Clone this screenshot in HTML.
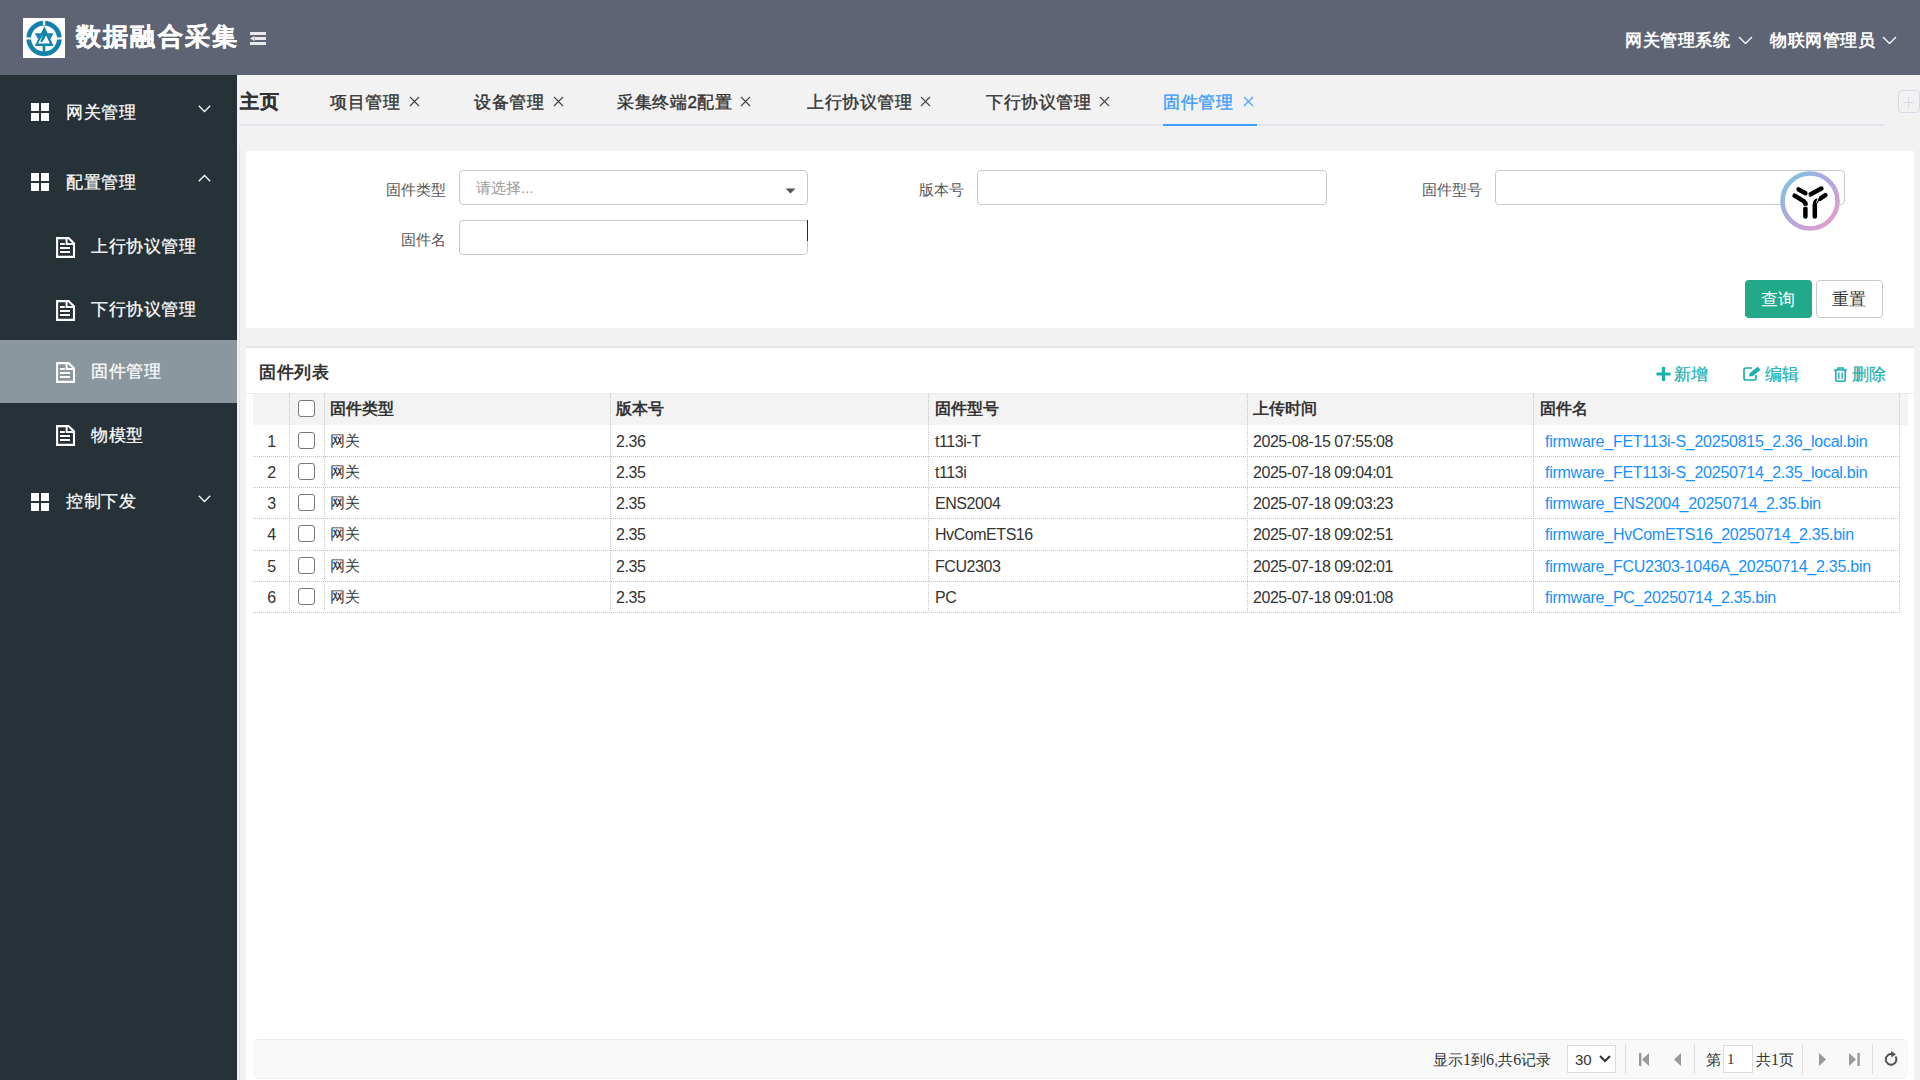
<!DOCTYPE html>
<html><head><meta charset="utf-8">
<style>
*{margin:0;padding:0;box-sizing:border-box}
html,body{width:1920px;height:1080px;overflow:hidden;background:#f2f2f2;font-family:"Liberation Sans",sans-serif;color:#333}
.abs{position:absolute}
.t{position:absolute;white-space:nowrap;line-height:1}
#hdr{position:absolute;left:0;top:0;width:1920px;height:75px;background:#5e6474}
#side{position:absolute;left:0;top:75px;width:237px;height:1005px;background:#263238}
#side .t{font-size:17px;letter-spacing:.6px;color:#fff;-webkit-text-stroke:0.25px #fff}
.tab{position:absolute;top:93.5px;font-size:17px;letter-spacing:.6px;color:#333;font-weight:400;-webkit-text-stroke:0.4px currentColor;white-space:nowrap;line-height:1}
.x{position:absolute;top:96px;width:11px;height:11px}
.lbl{position:absolute;font-size:15px;color:#555;white-space:nowrap;line-height:1}
.inp{position:absolute;height:35px;width:349px;border:1px solid #c9c9c9;border-radius:4px;background:#fff}
.panel{position:absolute;background:#fff}
.vd{position:absolute;top:394px;width:1px;height:218px;background:repeating-linear-gradient(180deg,#c4c4c4 0 1px,transparent 1px 2px)}
.hd{position:absolute;left:253px;width:1647px;height:1px;background:repeating-linear-gradient(90deg,#c4c4c4 0 1px,transparent 1px 2px)}
.th{position:absolute;top:401px;font-size:16px;font-weight:bold;color:#333;white-space:nowrap;line-height:1}
.td{position:absolute;font-size:16px;letter-spacing:-.45px;color:#333;white-space:nowrap;line-height:1}
.sf{font-family:"Liberation Serif",serif;font-size:16px}
.lk{color:#1890ff;letter-spacing:-.26px}
.cb{position:absolute;left:298px;width:17px;height:17px;border:1.5px solid #777;border-radius:3px;background:#fff}
</style></head><body>
<div id="hdr">
  <div class="abs" style="left:23px;top:18px;width:42px;height:40px;background:#fff">
    <svg width="42" height="40" viewBox="0 0 42 40" style="position:absolute;left:0;top:0">
      <circle cx="21.05" cy="20.5" r="15.35" fill="none" stroke="#1282ad" stroke-width="4.7"/>
      <g fill="#fff"><rect x="19.9" y="2" width="2.3" height="5"/><rect x="2" y="19.4" width="6" height="2.1"/><rect x="34" y="19.4" width="6" height="2.1"/></g>
      <g fill="#1282ad">
        <path d="M21.4 8.3 L30.5 28.1 L11.8 28.1 Z M21.4 13.8 L26.9 25.6 L15 25.6 Z" fill-rule="evenodd"/>
        <path d="M11.8 15.3 L18.3 15.3 L15.2 21.2 Z"/>
        <path d="M24.4 15.3 L30.4 15.3 L27.4 21.2 Z"/>
        <path d="M21.4 12.6 L23.6 16.6 L19.6 23.8 L17.2 23.8 Z"/>
        <rect x="19.7" y="27" width="2.6" height="7.5"/>
      </g>
    </svg>
  </div>
  <div class="t" style="left:76px;top:24px;font-size:25px;font-weight:bold;color:#fff;letter-spacing:2.2px;-webkit-text-stroke:0.4px #fff">数据融合采集</div>
  <svg class="abs" style="left:250px;top:32px" width="17" height="14" viewBox="0 0 17 14">
    <g fill="#e8e8ee"><rect x="0" y="0" width="16" height="3"/><rect x="5" y="5" width="11" height="3"/><rect x="0" y="10" width="16" height="3"/><path d="M0 6.5 L4.6 3.9 L4.6 9.1 Z"/></g>
  </svg>
  <div class="t" style="left:1625px;top:32px;font-size:17px;letter-spacing:.6px;font-weight:bold;color:#fff">网关管理系统</div>
  <svg class="abs" style="left:1738px;top:36px" width="15" height="9" viewBox="0 0 15 9"><path d="M1 1 L7.5 7.5 L14 1" fill="none" stroke="#fff" stroke-width="1.25"/></svg>
  <div class="t" style="left:1770px;top:31.5px;font-size:17px;letter-spacing:.6px;font-weight:bold;color:#fff">物联网管理员</div>
  <svg class="abs" style="left:1882px;top:36px" width="15" height="9" viewBox="0 0 15 9"><path d="M1 1 L7.5 7.5 L14 1" fill="none" stroke="#fff" stroke-width="1.25"/></svg>
</div>

<div id="side">
  <div class="abs" style="left:0;top:265px;width:237px;height:63px;background:#8a979e"></div>
  <!-- grid icons -->
  <svg class="abs" style="left:31px;top:27.5px" width="18" height="18"><g fill="#fff"><rect x="0" y="0" width="8" height="8"/><rect x="10" y="0" width="8" height="8"/><rect x="0" y="10" width="8" height="8"/><rect x="10" y="10" width="8" height="8"/></g></svg>
  <div class="t" style="left:66px;top:29px">网关管理</div>
  <svg class="abs" style="left:198px;top:30px" width="13" height="8" viewBox="0 0 13 8"><path d="M0.8 0.8 L6.5 6.5 L12.2 0.8" fill="none" stroke="#fff" stroke-width="1.25"/></svg>

  <svg class="abs" style="left:31px;top:97.5px" width="18" height="18"><g fill="#fff"><rect x="0" y="0" width="8" height="8"/><rect x="10" y="0" width="8" height="8"/><rect x="0" y="10" width="8" height="8"/><rect x="10" y="10" width="8" height="8"/></g></svg>
  <div class="t" style="left:66px;top:99px">配置管理</div>
  <svg class="abs" style="left:198px;top:99px" width="13" height="8" viewBox="0 0 13 8"><path d="M0.8 7.2 L6.5 1.5 L12.2 7.2" fill="none" stroke="#fff" stroke-width="1.25"/></svg>

  <svg class="abs doc" style="left:56px;top:162px" width="20" height="22" viewBox="0 0 20 22"><path d="M1.1 1.1 H12.6 L18 6.5 V19.9 H1.1 Z" fill="none" stroke="#fff" stroke-width="2.1" stroke-linejoin="miter"/><path d="M10.6 1 V7 H18" fill="none" stroke="#fff" stroke-width="1.9"/><rect x="4" y="6" width="4.8" height="2" fill="#fff"/><rect x="4" y="10" width="10" height="2" fill="#fff"/><rect x="4" y="14" width="10" height="2" fill="#fff"/></svg>
  <div class="t" style="left:91px;top:163px">上行协议管理</div>

  <svg class="abs doc" style="left:56px;top:225px" width="20" height="22" viewBox="0 0 20 22"><path d="M1.1 1.1 H12.6 L18 6.5 V19.9 H1.1 Z" fill="none" stroke="#fff" stroke-width="2.1" stroke-linejoin="miter"/><path d="M10.6 1 V7 H18" fill="none" stroke="#fff" stroke-width="1.9"/><rect x="4" y="6" width="4.8" height="2" fill="#fff"/><rect x="4" y="10" width="10" height="2" fill="#fff"/><rect x="4" y="14" width="10" height="2" fill="#fff"/></svg>
  <div class="t" style="left:91px;top:226px">下行协议管理</div>

  <svg class="abs doc" style="left:56px;top:287px" width="20" height="22" viewBox="0 0 20 22"><path d="M1.1 1.1 H12.6 L18 6.5 V19.9 H1.1 Z" fill="none" stroke="#fff" stroke-width="2.1" stroke-linejoin="miter"/><path d="M10.6 1 V7 H18" fill="none" stroke="#fff" stroke-width="1.9"/><rect x="4" y="6" width="4.8" height="2" fill="#fff"/><rect x="4" y="10" width="10" height="2" fill="#fff"/><rect x="4" y="14" width="10" height="2" fill="#fff"/></svg>
  <div class="t" style="left:91px;top:288px">固件管理</div>

  <svg class="abs doc" style="left:56px;top:350px" width="20" height="22" viewBox="0 0 20 22"><path d="M1.1 1.1 H12.6 L18 6.5 V19.9 H1.1 Z" fill="none" stroke="#fff" stroke-width="2.1" stroke-linejoin="miter"/><path d="M10.6 1 V7 H18" fill="none" stroke="#fff" stroke-width="1.9"/><rect x="4" y="6" width="4.8" height="2" fill="#fff"/><rect x="4" y="10" width="10" height="2" fill="#fff"/><rect x="4" y="14" width="10" height="2" fill="#fff"/></svg>
  <div class="t" style="left:91px;top:351.5px">物模型</div>

  <svg class="abs" style="left:31px;top:417.5px" width="18" height="18"><g fill="#fff"><rect x="0" y="0" width="8" height="8"/><rect x="10" y="0" width="8" height="8"/><rect x="0" y="10" width="8" height="8"/><rect x="10" y="10" width="8" height="8"/></g></svg>
  <div class="t" style="left:66px;top:418px">控制下发</div>
  <svg class="abs" style="left:198px;top:420px" width="13" height="8" viewBox="0 0 13 8"><path d="M0.8 0.8 L6.5 6.5 L12.2 0.8" fill="none" stroke="#fff" stroke-width="1.25"/></svg>
</div>

<!-- content edges -->

<div class="abs" style="left:239px;top:145px;width:1px;height:935px;background:#e4e4e4"></div>

<!-- tabs -->
<div class="tab" style="left:240px;top:91.5px;font-size:19px;font-weight:bold;-webkit-text-stroke:0.3px currentColor">主页</div>
<div class="tab" style="left:330px">项目管理</div>
<div class="tab" style="left:474px">设备管理</div>
<div class="tab" style="left:617px">采集终端2配置</div>
<div class="tab" style="left:807px">上行协议管理</div>
<div class="tab" style="left:986px">下行协议管理</div>
<div class="tab" style="left:1163px;color:#409eff">固件管理</div>
<svg class="x" style="left:408.5px" viewBox="0 0 11 11"><path d="M1 1 L10 10 M10 1 L1 10" stroke="#444" stroke-width="1.1"/></svg>
<svg class="x" style="left:552.5px" viewBox="0 0 11 11"><path d="M1 1 L10 10 M10 1 L1 10" stroke="#444" stroke-width="1.1"/></svg>
<svg class="x" style="left:740px" viewBox="0 0 11 11"><path d="M1 1 L10 10 M10 1 L1 10" stroke="#444" stroke-width="1.1"/></svg>
<svg class="x" style="left:919.5px" viewBox="0 0 11 11"><path d="M1 1 L10 10 M10 1 L1 10" stroke="#444" stroke-width="1.1"/></svg>
<svg class="x" style="left:1098.5px" viewBox="0 0 11 11"><path d="M1 1 L10 10 M10 1 L1 10" stroke="#444" stroke-width="1.1"/></svg>
<svg class="x" style="left:1242.5px" viewBox="0 0 11 11"><path d="M1 1 L10 10 M10 1 L1 10" stroke="#409eff" stroke-width="1.1"/></svg>
<div class="abs" style="left:239px;top:124px;width:1646px;height:2px;background:#e2e6ee"></div>
<div class="abs" style="left:1163px;top:124px;width:94px;height:2px;background:#409eff"></div>
<div class="abs" style="left:1898px;top:90px;width:22px;height:23px;border:1px solid #d3dbe6;border-radius:4px"></div>
<svg class="abs" style="left:1903px;top:97px" width="12" height="12"><path d="M5.5 0.5 V10.5 M0.5 5.5 H10.5" stroke="#d3dbe6" stroke-width="1"/></svg>

<!-- search panel -->
<div class="panel" style="left:246px;top:151px;width:1668px;height:177px"></div>
<div class="lbl" style="left:386px;top:182px">固件类型</div>
<div class="inp" style="left:459px;top:170px"></div>
<div class="t" style="left:476px;top:180px;font-size:15px;color:#999">请选择...</div>
<svg class="abs" style="left:785px;top:188px" width="11" height="6"><path d="M0.5 0.5 L10.5 0.5 L5.5 5.5 Z" fill="#555"/></svg>
<div class="lbl" style="left:401px;top:232px">固件名</div>
<div class="inp" style="left:459px;top:220px"></div>
<div class="abs" style="left:806.5px;top:220px;width:1.5px;height:21px;background:#2a2a2a"></div>
<div class="lbl" style="left:919px;top:182px">版本号</div>
<div class="inp" style="left:977px;top:170px;width:350px"></div>
<div class="lbl" style="left:1422px;top:182px">固件型号</div>
<div class="inp" style="left:1495px;top:170px;width:350px"></div>
<div class="abs" style="left:1745px;top:280px;width:67px;height:38px;background:#21a98a;border-radius:4px"></div>
<div class="t" style="left:1761px;top:291px;font-size:17px;color:#fff">查询</div>
<div class="abs" style="left:1816px;top:280px;width:67px;height:38px;background:#fff;border:1px solid #c9c9c9;border-radius:4px"></div>
<div class="t" style="left:1832px;top:291px;font-size:17px;color:#333">重置</div>

<!-- logo bubble -->
<svg class="abs" style="left:1780px;top:171px" width="60" height="60" viewBox="0 0 60 60">
  <defs><linearGradient id="rg" x1="0" y1="0" x2="1" y2="1"><stop offset="0" stop-color="#72c8de"/><stop offset="0.5" stop-color="#b3a6e0"/><stop offset="1" stop-color="#f09ac4"/></linearGradient></defs>
  <circle cx="30" cy="30" r="29" fill="#fff"/>
  <circle cx="30" cy="30" r="27.5" fill="none" stroke="url(#rg)" stroke-width="4.6"/>
  <g stroke="#000" stroke-width="4.5" stroke-linecap="round" fill="none">
    <path d="M18.6 18.4 L25.6 22.2"/>
    <path d="M30.2 23.6 L41.4 17.6"/>
    <path d="M14.6 24.6 L23.6 30.2 Q25.6 31.6 25.6 33.6"/>
    <path d="M25.4 37.4 V45.6"/>
    <path d="M45.4 24.2 L39.8 27.8"/>
    <path d="M34.8 33.2 Q34.8 31.2 36.6 29.8 M34.8 33.2 V45.6"/>
  </g>
  <g stroke="#fff" stroke-width="0.9" fill="none">
    <path d="M27.6 21.4 L29.2 25.8"/>
    <path d="M22.4 35.4 L28.6 35.2"/>
    <path d="M36.4 31.8 L38.8 25.6"/>
  </g>
</svg>

<!-- table panel -->
<div class="panel" style="left:246px;top:346px;width:1668px;height:734px;border-top:2px solid #e3e7ec"></div>
<div class="t" style="left:259px;top:364px;font-size:17px;letter-spacing:.5px;font-weight:bold;color:#333">固件列表</div>
<div class="abs" style="left:246px;top:393px;width:1668px;height:1px;background:#e8ebef"></div>
<svg class="abs" style="left:1656px;top:367px" width="15" height="14"><path d="M7.5 0 V14 M0.5 7 H14.5" stroke="#1aafb0" stroke-width="3.2"/></svg>
<div class="t" style="left:1674px;top:366px;font-size:17px;color:#1aafb0;-webkit-text-stroke:.2px #1aafb0">新增</div>
<svg class="abs" style="left:1743px;top:366px" width="19" height="15" viewBox="0 0 19 15"><path d="M9 2 H3 Q1 2 1 4 V12 Q1 14 3 14 H11 Q13 14 13 12 V9" fill="none" stroke="#1aafb0" stroke-width="1.7"/><path d="M6 10.5 L6.8 7.2 L14.5 0.8 L17.6 3.8 L10 10 Z" fill="#1aafb0"/></svg>
<div class="t" style="left:1765px;top:366px;font-size:17px;color:#1aafb0;-webkit-text-stroke:.2px #1aafb0">编辑</div>
<svg class="abs" style="left:1833px;top:367px" width="15" height="15" viewBox="0 0 15 15"><path d="M1 3 H14 M5 3 V1 H10 V3 M2.8 3 V13.2 Q2.8 14.2 3.8 14.2 H11.2 Q12.2 14.2 12.2 13.2 V3" fill="none" stroke="#1aafb0" stroke-width="1.6"/><path d="M5.8 5.5 V11.8 M9.2 5.5 V11.8" stroke="#1aafb0" stroke-width="1.4"/></svg>
<div class="t" style="left:1852px;top:366px;font-size:17px;color:#1aafb0;-webkit-text-stroke:.2px #1aafb0">删除</div>

<div id="tblwrap">
<div class="abs" style="left:253px;top:394px;width:1655px;height:31px;background:#f3f3f3"></div>
<div class="vd" style="left:289px"></div>
<div class="vd" style="left:324px"></div>
<div class="vd" style="left:610px"></div>
<div class="vd" style="left:928px"></div>
<div class="vd" style="left:1247px"></div>
<div class="vd" style="left:1533px"></div>
<div class="vd" style="left:1899px"></div>
<div class="hd" style="top:456px"></div>
<div class="hd" style="top:487px"></div>
<div class="hd" style="top:518px"></div>
<div class="hd" style="top:550px"></div>
<div class="hd" style="top:581px"></div>
<div class="hd" style="top:612px"></div>
<div class="th" style="left:330px">固件类型</div>
<div class="th" style="left:616px">版本号</div>
<div class="th" style="left:935px">固件型号</div>
<div class="th" style="left:1253px">上传时间</div>
<div class="th" style="left:1540px">固件名</div>
<div class="cb" style="top:400px"></div>
<div class="td" style="left:253px;width:37px;text-align:center;top:433.5px">1</div>
<div class="cb" style="top:432px"></div>
<div class="td" style="left:330px;top:433px;font-size:15px;letter-spacing:0">网关</div>
<div class="td" style="left:616px;top:433.5px">2.36</div>
<div class="td" style="left:935px;top:433.5px">t113i-T</div>
<div class="td" style="left:1253px;top:433.5px">2025-08-15 07:55:08</div>
<div class="td lk" style="left:1545px;top:433.5px">firmware_FET113i-S_20250815_2.36_local.bin</div>
<div class="td" style="left:253px;width:37px;text-align:center;top:464.5px">2</div>
<div class="cb" style="top:463px"></div>
<div class="td" style="left:330px;top:464px;font-size:15px;letter-spacing:0">网关</div>
<div class="td" style="left:616px;top:464.5px">2.35</div>
<div class="td" style="left:935px;top:464.5px">t113i</div>
<div class="td" style="left:1253px;top:464.5px">2025-07-18 09:04:01</div>
<div class="td lk" style="left:1545px;top:464.5px">firmware_FET113i-S_20250714_2.35_local.bin</div>
<div class="td" style="left:253px;width:37px;text-align:center;top:495.5px">3</div>
<div class="cb" style="top:494px"></div>
<div class="td" style="left:330px;top:495px;font-size:15px;letter-spacing:0">网关</div>
<div class="td" style="left:616px;top:495.5px">2.35</div>
<div class="td" style="left:935px;top:495.5px">ENS2004</div>
<div class="td" style="left:1253px;top:495.5px">2025-07-18 09:03:23</div>
<div class="td lk" style="left:1545px;top:495.5px">firmware_ENS2004_20250714_2.35.bin</div>
<div class="td" style="left:253px;width:37px;text-align:center;top:526.5px">4</div>
<div class="cb" style="top:525px"></div>
<div class="td" style="left:330px;top:526px;font-size:15px;letter-spacing:0">网关</div>
<div class="td" style="left:616px;top:526.5px">2.35</div>
<div class="td" style="left:935px;top:526.5px">HvComETS16</div>
<div class="td" style="left:1253px;top:526.5px">2025-07-18 09:02:51</div>
<div class="td lk" style="left:1545px;top:526.5px">firmware_HvComETS16_20250714_2.35.bin</div>
<div class="td" style="left:253px;width:37px;text-align:center;top:558.5px">5</div>
<div class="cb" style="top:557px"></div>
<div class="td" style="left:330px;top:558px;font-size:15px;letter-spacing:0">网关</div>
<div class="td" style="left:616px;top:558.5px">2.35</div>
<div class="td" style="left:935px;top:558.5px">FCU2303</div>
<div class="td" style="left:1253px;top:558.5px">2025-07-18 09:02:01</div>
<div class="td lk" style="left:1545px;top:558.5px">firmware_FCU2303-1046A_20250714_2.35.bin</div>
<div class="td" style="left:253px;width:37px;text-align:center;top:589.5px">6</div>
<div class="cb" style="top:588px"></div>
<div class="td" style="left:330px;top:589px;font-size:15px;letter-spacing:0">网关</div>
<div class="td" style="left:616px;top:589.5px">2.35</div>
<div class="td" style="left:935px;top:589.5px">PC</div>
<div class="td" style="left:1253px;top:589.5px">2025-07-18 09:01:08</div>
<div class="td lk" style="left:1545px;top:589.5px">firmware_PC_20250714_2.35.bin</div>
</div><!--/tbl-->

<!-- pagination -->
<div class="abs" style="left:253px;top:1039px;width:1655px;height:40px;background:#f9f9f9;border-top:1px solid #ebebeb;border-bottom:1px solid #efefef;border-radius:6px"></div>
<div class="t" style="left:1433px;top:1052px;font-size:15px;color:#333">显示<span class="sf">1</span>到<span class="sf">6</span>,共<span class="sf">6</span>记录</div>
<div class="abs" style="left:1567px;top:1045px;width:49px;height:28px;background:#fff;border:1px solid #dcdcdc"></div>
<div class="t" style="left:1575px;top:1052px;font-size:15px;color:#333">30</div>
<svg class="abs" style="left:1599px;top:1055px" width="12" height="8"><path d="M1 1 L6 6 L11 1" fill="none" stroke="#333" stroke-width="2"/></svg>
<div class="abs" style="left:1625px;top:1044px;width:1px;height:30px;background:#ddd"></div>
<svg class="abs" style="left:1639px;top:1053px" width="11" height="13"><rect x="0" y="0" width="2.4" height="13" fill="#999"/><path d="M10 0 V13 L3 6.5 Z" fill="#999"/></svg>
<svg class="abs" style="left:1673px;top:1053px" width="9" height="13"><path d="M8 0 V13 L1 6.5 Z" fill="#999"/></svg>
<div class="abs" style="left:1694px;top:1044px;width:1px;height:30px;background:#ddd"></div>
<div class="t" style="left:1706px;top:1052px;font-size:15px;color:#333">第</div>
<div class="abs" style="left:1723px;top:1045px;width:30px;height:28px;background:#fff;border:1px solid #dcdcdc"></div>
<div class="t sf" style="left:1727px;top:1052px;font-size:15px;color:#333">1</div>
<div class="t" style="left:1756px;top:1052px;font-size:15px;color:#333">共<span class="sf">1</span>页</div>
<div class="abs" style="left:1802px;top:1044px;width:1px;height:30px;background:#ddd"></div>
<svg class="abs" style="left:1818px;top:1053px" width="9" height="13"><path d="M1 0 V13 L8 6.5 Z" fill="#999"/></svg>
<svg class="abs" style="left:1849px;top:1053px" width="11" height="13"><path d="M0 0 V13 L7 6.5 Z" fill="#999"/><rect x="8.4" y="0" width="2.4" height="13" fill="#999"/></svg>
<div class="abs" style="left:1872px;top:1044px;width:1px;height:30px;background:#ddd"></div>
<svg class="abs" style="left:1884px;top:1051px" width="14" height="15" viewBox="0 0 14 15"><path d="M11.5 5.5 A5.3 5.3 0 1 1 8.5 3.3" fill="none" stroke="#555" stroke-width="2"/><path d="M7 0 L12 3.2 L7.5 6.5 Z" fill="#555"/></svg>
</body></html>
